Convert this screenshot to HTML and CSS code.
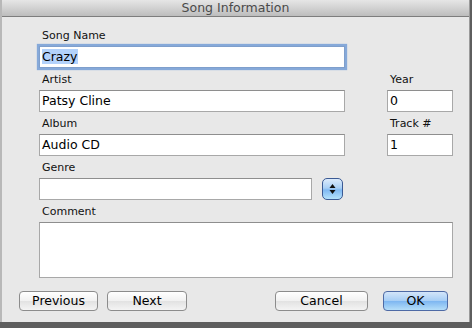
FILE: index.html
```html
<!DOCTYPE html>
<html lang="en">
<head>
  <meta charset="UTF-8">
  <title>Song Information</title>
<link rel="stylesheet" href="styles.css">
</head>
<body>
  <div class="window">
    <div class="titlebar">Song Information</div>
    <div class="form">
      <div class="row">
        <div class="field wide">
          <div class="label">Song Name</div>
          <div class="input focus"><span class="sel">Crazy</span></div>
        </div>
      </div>
      <div class="row">
        <div class="field wide">
          <div class="label">Artist</div>
          <div class="input">Patsy Cline</div>
        </div>
        <div class="field small">
          <div class="label">Year</div>
          <div class="input">0</div>
        </div>
      </div>
      <div class="row">
        <div class="field wide">
          <div class="label">Album</div>
          <div class="input">Audio CD</div>
        </div>
        <div class="field small">
          <div class="label">Track #</div>
          <div class="input">1</div>
        </div>
      </div>
      <div class="row">
        <div class="field genre">
          <div class="label">Genre</div>
          <div class="combo">
            <div class="input"></div>
            <div class="stepper">
              <svg width="7" height="12" viewBox="0 0 7 12"><path d="M3.5 1 L6.5 5 L0.5 5 Z M0.5 7 L6.5 7 L3.5 11 Z" fill="#111"/></svg>
            </div>
          </div>
        </div>
      </div>
      <div class="row">
        <div class="field full">
          <div class="label">Comment</div>
          <div class="input area"></div>
        </div>
      </div>
    </div>
    <div class="buttons">
      <div class="group">
        <div class="btn prev">Previous</div>
        <div class="btn next">Next</div>
      </div>
      <div class="group">
        <div class="btn cancel">Cancel</div>
        <div class="btn ok">OK</div>
      </div>
    </div>
  </div>
</body>
</html>
```

FILE: styles.css
```css
body{margin:0;background:#5e5e5e;font-family:"DejaVu Sans","Liberation Sans",sans-serif;color:#000;}
.window{width:467px;height:322px;background:#e8e8e8;border-left:2px solid #b8b8b8;border-right:1px solid #9a9a9a;}
.titlebar{height:16px;line-height:15px;text-align:center;font-size:12.5px;color:#4a4a4a;background:linear-gradient(#e6e6e6,#bdbdbd);border-bottom:1px solid #7d7d7d;}
.form{padding:7px 0 0 37px;}
.row{display:flex;gap:42px;}
.field{display:flex;flex-direction:column;}
.wide{width:306px;}
.small{width:66px;}
.genre{width:306px;}
.full{width:414px;}
.label{box-sizing:border-box;height:22px;line-height:21px;padding-top:1px;font-size:11px;padding-left:3px;color:#111;}
.input{box-sizing:border-box;height:22px;background:#fff;border:1px solid #a8a8a8;border-top-color:#8e8e8e;font-size:12.5px;line-height:20px;padding-left:2px;}
.focus{box-shadow:0 0 1px 2px #86a9d9;border-color:#7f9fcc;}
.sel{background:#b3d2fb;}
.combo{display:flex;align-items:center;gap:10px;}
.combo .input{width:273px;}
.stepper{box-sizing:border-box;width:21px;height:22px;border:1px solid #3b5a94;border-radius:5px;background:linear-gradient(#dcebfc,#a9d0f6 45%,#7fb8f2 55%,#b4e2fc);display:flex;align-items:center;justify-content:center;}
.area{height:56px;}
.buttons{display:flex;justify-content:space-between;padding:13px 21px 0 17px;}
.group{display:flex;gap:9px;}
.cancel{margin-right:6px;}
.btn{box-sizing:border-box;height:20px;line-height:18px;text-align:center;font-size:12.5px;border:1px solid #8c8c8c;border-radius:4px;background:linear-gradient(#ffffff,#f1f1f1 50%,#e2e2e2 51%,#f4f4f4);}
.prev{width:79px;}
.next{width:80px;}
.cancel{width:93px;}
.ok{width:65px;border-color:#4e6aa5;background:linear-gradient(#d3e5fa,#a5cdf5 50%,#7db6f1 51%,#b5def9);}
```
